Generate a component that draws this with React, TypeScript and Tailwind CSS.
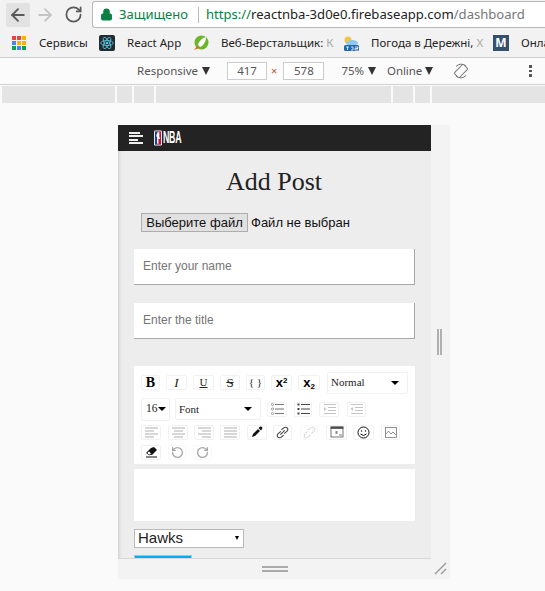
import { ArrowLeft, ArrowRight, RotateCw, Lock } from 'lucide-react';
import type { ReactNode } from 'react';

const ui = "font-['Noto_Sans',sans-serif]";

function Caret({ ml = 'ml-[5px]' }: { ml?: string }) {
  return <span className={`${ml} inline-block h-0 w-0 border-x-[4.5px] border-t-[8px] border-x-transparent border-t-[#333]`} />;
}

function AppsGrid() {
  const colors = ['#e8453c', '#e8453c', '#f4b400', '#4285f4', '#f4b400', '#f4b400', '#0f9d58', '#4285f4', '#0f9d58'];
  return (
    <div className="grid grid-cols-3 gap-[1px]">
      {colors.map((c, i) => (
        <span key={i} className="h-[4px] w-[4px]" style={{ background: c }} />
      ))}
    </div>
  );
}

function ReactIcon() {
  return (
    <svg width="16" height="16" viewBox="0 0 16 16">
      <rect width="16" height="16" rx="2" fill="#222b30" />
      <g fill="none" stroke="#5fc9e6" strokeWidth=".8">
        <ellipse cx="8" cy="8" rx="6.3" ry="2.5" />
        <ellipse cx="8" cy="8" rx="6.3" ry="2.5" transform="rotate(60 8 8)" />
        <ellipse cx="8" cy="8" rx="6.3" ry="2.5" transform="rotate(120 8 8)" />
      </g>
      <circle cx="8" cy="8" r="1.3" fill="#5fc9e6" />
    </svg>
  );
}

function RocketIcon() {
  return (
    <svg width="16" height="16" viewBox="0 0 16 16">
      <circle cx="8.5" cy="7.5" r="7" fill="#6cb52d" />
      <path d="M13 2 C9 3 6 6 5 10 L7 12 C10 11 13 7 13 2Z" fill="#fff" />
      <path d="M4 11 L1 15 L6 13Z" fill="#e8622a" />
    </svg>
  );
}

function WeatherIcon() {
  return (
    <svg width="16" height="16" viewBox="0 0 16 16">
      <circle cx="5" cy="5" r="3.5" fill="#f5c33b" />
      <ellipse cx="9" cy="8" rx="6" ry="3" fill="#8fc7ee" />
      <rect x="1" y="10" width="15" height="6" rx="1.5" fill="#1f67ad" />
      <path d="M3 12h3M4.5 12v3M8 12h2v3h-2M12 12h3v1.5h-3v1.5h3" stroke="#fff" strokeWidth=".8" fill="none" />
    </svg>
  );
}

function Bookmark({ icon, label, fade, w }: { icon: ReactNode; label: string; fade?: string; w: string }) {
  return (
    <div className={`flex shrink-0 items-center ${w}`}>
      <div className="mr-[12px] flex w-[16px] justify-center">{icon}</div>
      <span className="whitespace-nowrap text-[11.5px] text-[#222]">
        {label}
        {fade && <span className="text-[#aaa]">{fade}</span>}
      </span>
    </div>
  );
}

function Ruler() {
  return (
    <div className="mt-[1px] ml-[2px] flex h-[17px] gap-[2px]">
      <div className="w-[113px] bg-[#e4e4e4]" />
      <div className="w-[15px] bg-[#e4e4e4]" />
      <div className="w-[20px] bg-[#e4e4e4]" />
      <div className="w-[235px] bg-[#e4e4e4]" />
      <div className="w-[20px] bg-[#e4e4e4]" />
      <div className="w-[15px] bg-[#e4e4e4]" />
      <div className="flex-1 bg-[#e4e4e4]" />
    </div>
  );
}

function TextField({ placeholder }: { placeholder: string }) {
  return (
    <input
      readOnly
      placeholder={placeholder}
      className="block h-[36px] w-[281px] border-r border-b border-[#a9a9a9] bg-white px-[9px] font-['Liberation_Sans',sans-serif] text-[12px] placeholder:text-[#757575]"
    />
  );
}

function Btn({ children, w, faded = false }: { children: ReactNode; w: string; faded?: boolean }) {
  return (
    <div className={`flex h-[15px] shrink-0 ${w} items-center justify-center rounded-[2px] border border-[#f1f1f1] bg-white ${faded ? 'opacity-40' : ''}`}>
      {children}
    </div>
  );
}

function Lines({ kind }: { kind: 'left' | 'center' | 'right' | 'justify' }) {
  const rows: [number, number][] =
    kind === 'left' ? [[0, 13], [0, 9], [0, 13], [0, 9]]
    : kind === 'center' ? [[0, 13], [2, 9], [0, 13], [2, 9]]
    : kind === 'right' ? [[0, 13], [4, 9], [0, 13], [4, 9]]
    : [[0, 13], [0, 13], [0, 13], [0, 13]];
  return (
    <svg width="13" height="11" viewBox="0 0 13 11">
      {rows.map(([x, w], i) => (
        <rect key={i} x={x} y={i * 3 + 0.5} width={w} height="1" fill="#b0b0b0" />
      ))}
    </svg>
  );
}

function ListIcon({ ordered = false }: { ordered?: boolean }) {
  return (
    <svg width="13" height="12" viewBox="0 0 13 12">
      {[1.5, 6, 10.5].map((y) => (
        <g key={y}>
          {ordered ? <rect x="0.5" y={y - 1} width="2" height="2" fill="#444" /> : <circle cx="1.5" cy={y} r="1.1" fill="none" stroke="#777" strokeWidth=".7" />}
          <rect x="4" y={y - 0.5} width="9" height="1" fill={ordered ? '#444' : '#777'} />
        </g>
      ))}
    </svg>
  );
}

function IndentIcon({ out = false }: { out?: boolean }) {
  return (
    <svg width="13" height="11" viewBox="0 0 13 11" fill="#c4c4c4">
      <rect x="1" y="0" width="12" height="1" />
      <rect x="5" y="3" width="8" height="1" />
      <rect x="5" y="6" width="8" height="1" />
      <rect x="1" y="9" width="12" height="1" />
      <path d={out ? 'M3 3v4L0.5 5z' : 'M1 3v4L3.5 5z'} />
    </svg>
  );
}

function DropDown({ w, label }: { w: string; label: string }) {
  return (
    <div className={`flex h-[22px] shrink-0 ${w} items-center justify-between rounded-[2px] border border-[#f1f1f1] bg-white pr-[8px] pl-[3px] text-[11px] text-[#222]`}>
      <span>{label}</span>
      <span className="h-0 w-0 border-x-[4px] border-t-[4px] border-x-transparent border-t-black" />
    </div>
  );
}

function EditorToolbar() {
  return (
    <div className="flex h-[98px] w-[281px] flex-col bg-white pt-[6px] pl-[7px] font-['Liberation_Serif',serif]">
      <div className="flex items-center">
        <div className="flex items-center gap-[6px]">
          <Btn w="w-[19px]"><span className="text-[14px] leading-none font-bold text-black">B</span></Btn>
          <Btn w="w-[21px]"><span className="text-[13px] leading-none text-[#222] italic">I</span></Btn>
          <Btn w="w-[21px]"><span className="text-[11px] leading-none text-[#222] underline">U</span></Btn>
          <Btn w="w-[20px]"><span className="text-[13px] leading-none text-[#222] line-through">S</span></Btn>
          <Btn w="w-[19px]"><span className="text-[11px] leading-none whitespace-pre text-[#222]">{'{ }'}</span></Btn>
          <Btn w="w-[21px]"><span className="font-['Liberation_Sans',sans-serif] text-[13px] leading-none font-bold text-black">x<sup className="text-[8px]">2</sup></span></Btn>
          <Btn w="w-[22px]"><span className="font-['Liberation_Sans',sans-serif] text-[13px] leading-none font-bold text-black">x<sub className="text-[8px]">2</sub></span></Btn>
        </div>
        <div className="ml-[7px]"><DropDown w="w-[81px]" label="Normal" /></div>
      </div>
      <div className="mt-[4px] flex items-center">
        <div className="flex h-[23px] w-[29px] shrink-0 items-center justify-between rounded-[2px] border border-[#f1f1f1] pr-[3px] pl-[4px] text-[11.5px] text-[#222]">
          <span>16</span>
          <span className="h-0 w-0 border-x-[4px] border-t-[4px] border-x-transparent border-t-black" />
        </div>
        <div className="ml-[5px]"><DropDown w="w-[86px]" label="Font" /></div>
        <div className="ml-[6px]"><Btn w="w-[20px]"><ListIcon /></Btn></div>
        <div className="ml-[7px]"><Btn w="w-[18px]"><ListIcon ordered /></Btn></div>
        <div className="ml-[7px]"><Btn w="w-[20px]"><IndentIcon /></Btn></div>
        <div className="ml-[8px]"><Btn w="w-[19px]"><IndentIcon out /></Btn></div>
      </div>
      <div className="mt-[4px] flex items-center">
        <Btn w="w-[20px]"><Lines kind="left" /></Btn>
        <div className="ml-[7px]"><Btn w="w-[20px]"><Lines kind="center" /></Btn></div>
        <div className="ml-[6px]"><Btn w="w-[20px]"><Lines kind="right" /></Btn></div>
        <div className="ml-[6px]"><Btn w="w-[20px]"><Lines kind="justify" /></Btn></div>
        <div className="ml-[7px]">
          <Btn w="w-[20px]">
            <svg width="12" height="12" viewBox="0 0 12 12"><path d="M1 11 L2 8 L7 3 L9 5 L4 10Z" fill="#111" /><path d="M7.5 2 L9 .8 Q10 .2 11 1 Q11.8 2 11 3 L10 4.5Z" fill="#111" /></svg>
          </Btn>
        </div>
        <div className="ml-[6px]">
          <Btn w="w-[19px]">
            <svg width="13" height="13" viewBox="0 0 12 12" fill="none" stroke="#444"><path d="M5 3.5 L7.5 1.5 Q9 .5 10.5 2 Q11.5 3.5 10 5 L7.5 7" /><path d="M7 8.5 L4.5 10.5 Q3 11.5 1.5 10 Q.5 8.5 2 7 L4.5 5" /><path d="M4 8 L8 4" /></svg>
          </Btn>
        </div>
        <div className="ml-[8px]">
          <Btn w="w-[18px]" faded>
            <svg width="13" height="13" viewBox="0 0 12 12" fill="none" stroke="#888" strokeDasharray="1.5 .6"><path d="M5 3.5 L7.5 1.5 Q9 .5 10.5 2 Q11.5 3.5 10 5 L7.5 7" /><path d="M7 8.5 L4.5 10.5 Q3 11.5 1.5 10 Q.5 8.5 2 7 L4.5 5" /></svg>
          </Btn>
        </div>
        <div className="ml-[8px]">
          <Btn w="w-[21px]">
            <svg width="14" height="12" viewBox="0 0 14 12" fill="none" stroke="#555" strokeWidth=".8"><rect x="1" y="1" width="12" height="10" /><rect x="1" y="1" width="12" height="1.5" fill="#444" /><rect x="5.5" y="5" width="2" height="3" fill="#888" stroke="none" /><path d="M9 9h3" /></svg>
          </Btn>
        </div>
        <div className="ml-[6px]">
          <Btn w="w-[21px]">
            <svg width="13" height="13" viewBox="0 0 13 13" fill="none" stroke="#111"><circle cx="6.5" cy="6.5" r="5.5" /><circle cx="4.5" cy="5" r=".7" fill="#111" stroke="none" /><circle cx="8.5" cy="5" r=".7" fill="#111" stroke="none" /><path d="M3.5 8 Q6.5 11 9.5 8" /></svg>
          </Btn>
        </div>
        <div className="ml-[7px]">
          <Btn w="w-[19px]">
            <svg width="12" height="11" viewBox="0 0 12 11" fill="none" stroke="#777" strokeWidth=".8"><rect x=".5" y=".5" width="11" height="10" /><path d="M1 7 L3.5 4 L6 7 L8 5 L11 8" /></svg>
          </Btn>
        </div>
      </div>
      <div className="mt-[5px] flex items-center">
        <Btn w="w-[20px]">
          <svg width="13" height="12" viewBox="0 0 13 12"><path d="M1 7 L6 2 L9 1 L12 4 L7 9 L4 9Z" fill="#111" /><path d="M2 7 L4 5 L6.5 8 L4 9Z" fill="#fff" stroke="#111" strokeWidth=".6" /><rect x="1" y="10.5" width="11" height="1" fill="#111" /></svg>
        </Btn>
        <div className="ml-[7px]">
          <Btn w="w-[18px]" faded>
            <RotateCw size={13} strokeWidth={2.4} color="#222" className="-scale-x-100" />
          </Btn>
        </div>
        <div className="ml-[7px]">
          <Btn w="w-[19px]" faded>
            <RotateCw size={13} strokeWidth={2.4} color="#222" />
          </Btn>
        </div>
      </div>
    </div>
  );
}

function DevicePage() {
  return (
    <div className="relative h-[434px] w-[313px] overflow-hidden border-b border-[#d8d8d8] bg-[#ededed] shadow-[inset_4px_0_3px_-2px_rgba(0,0,0,0.1)]">
      <div className="flex h-[26px] items-center bg-[#232323] pl-[11px]">
        <div className="flex flex-col gap-[1.5px]">
          <span className="h-[2px] w-[11px] bg-[#eee]" />
          <span className="h-[2px] w-[14px] bg-[#eee]" />
          <span className="h-[2px] w-[9px] bg-[#eee]" />
          <span className="h-[2px] w-[14px] bg-[#eee]" />
        </div>
        <svg className="ml-[11px]" width="8" height="16" viewBox="0 0 9 17">
          <rect width="9" height="17" rx="1.5" fill="#fff" />
          <rect x="1" y="1" width="3.5" height="15" fill="#1d428a" />
          <rect x="4.5" y="1" width="3.5" height="15" fill="#c8102e" />
          <path d="M4 2 L6 2 L6 7 L7 10 L5 9 L5 15 L3.5 15 L3.5 8 L2.5 6Z" fill="#fff" />
        </svg>
        <span className="ml-[1px] origin-left [transform:scaleX(0.55)] font-['Liberation_Sans',sans-serif] text-[16px] leading-none font-bold tracking-[-0.5px] text-white">NBA</span>
      </div>
      <h1 className="mt-[16px] pr-[1px] text-center font-['Liberation_Serif',serif] text-[26px] leading-[30px] text-[#222]">Add Post</h1>
      <div className="mt-[16px] ml-[23px] flex items-center font-['Liberation_Sans',sans-serif] text-[13px] text-[#111]">
        <button type="button" className="h-[19px] w-[107px] rounded-none border border-[#adadad] bg-[#e1e1e1] px-0 leading-none">Выберите файл</button>
        <span className="ml-[3px]">Файл не выбран</span>
      </div>
      <div className="mt-[16px] ml-[16px] flex flex-col gap-[18px]">
        <TextField placeholder="Enter your name" />
        <TextField placeholder="Enter the title" />
      </div>
      <div className="mt-[27px] ml-[16px]">
        <EditorToolbar />
        <div className="mt-[5px] h-[52px] w-[281px] bg-white" />
      </div>
      <div className="mt-[8px] ml-[16px] flex h-[19px] w-[110px] items-center justify-between border border-[#b9b9b9] bg-white pr-[4px] pl-[3px] font-['Liberation_Sans',sans-serif] text-[15px] text-[#222]">
        <span>Hawks</span>
        <span className="h-0 w-0 border-x-[2.5px] border-t-[4px] border-x-transparent border-t-black" />
      </div>
      <div className="mt-[7px] ml-[16px] h-[10px] w-[58px] border border-[#9fc5d8] bg-[#00aef2]" />
    </div>
  );
}

export default function App() {
  return (
    <div className={`h-[591px] w-[545px] overflow-hidden bg-[#fafafa] ${ui}`}>
      <div className="flex h-[29px] items-center bg-[#f2f2f2] pl-[6px]">
        <div className="flex h-[24px] w-[24px] items-center justify-center rounded-[2px] bg-[#e2e2e2]">
          <ArrowLeft size={20} color="#5a5a5a" strokeWidth={2.2} />
        </div>
        <ArrowRight size={20} color="#c4c4c4" strokeWidth={2.2} className="ml-[5px]" />
        <RotateCw size={19} color="#5a5a5a" strokeWidth={2.2} className="ml-[9px]" />
        <div className="ml-[9px] flex h-[27px] flex-1 items-center rounded-l-[3px] border border-r-0 border-[#b8b8b8] bg-white pl-[7px]">
          <Lock size={13} color="#0b8043" fill="#0b8043" />
          <span className="ml-[6px] text-[13px] text-[#0b8043]">Защищено</span>
          <span className="mr-[7px] ml-[10px] h-[16px] w-px bg-[#bbb]" />
          <span className="whitespace-nowrap text-[13.08px] text-[#0b8043]">https://</span>
          <span className="whitespace-nowrap text-[13.08px] text-[#222]">reactnba-3d0e0.firebaseapp.com</span>
          <span className="whitespace-nowrap text-[13.08px] text-[#777]">/dashboard</span>
        </div>
      </div>
      <div className="flex h-[28px] items-center overflow-hidden bg-[#f2f2f2] pl-[11px]">
        <Bookmark icon={<AppsGrid />} label="Сервисы" w="w-[88px]" />
        <Bookmark icon={<ReactIcon />} label="React App" w="w-[94px]" />
        <Bookmark icon={<RocketIcon />} label="Веб-Верстальщик: " fade="К" w="w-[150px]" />
        <Bookmark icon={<WeatherIcon />} label="Погода в Дережні, " fade="Х" w="w-[150px]" />
        <Bookmark
          icon={<span className="flex h-[16px] w-[16px] items-center justify-center bg-[#34506e] text-[12px] font-bold text-white">M</span>}
          label="Онлайн"
          w="w-[80px]"
        />
      </div>
      <div className="flex h-[28px] items-center border-t border-b border-[#d0d0d0] bg-[#fbfbfb] pl-[137px] text-[11.5px] text-[#555]">
        <span>Responsive</span>
        <Caret ml="ml-[4px]" />
        <div className="ml-[17px] flex h-[18px] w-[40px] items-center justify-center border border-[#ccc] bg-white text-[11.5px]">417</div>
        <span className="mr-[6px] ml-[4px] text-[11px] text-[#b5562c]">×</span>
        <div className="flex h-[18px] w-[41px] items-center justify-center border border-[#ccc] bg-white text-[11.5px]">578</div>
        <span className="ml-[17px]">75%</span>
        <Caret ml="ml-[4px]" />
        <span className="ml-[11px] tracking-[-0.1px]">Online</span>
        <Caret ml="ml-[3px]" />
        <svg className="ml-[20px] shrink-0" width="16" height="16" viewBox="0 0 16 16" fill="none" stroke="#777" strokeWidth="1">
          <path d="M3 3.5 A7 7 0 0 1 13 3 M13 12.5 A7 7 0 0 1 3 13" />
          <rect x="4.5" y="1.5" width="7" height="13" rx="1.5" transform="rotate(45 8 8)" />
        </svg>
        <div className="ml-[60px] flex shrink-0 flex-col gap-[2px]">
          <span className="h-[2.5px] w-[3px] bg-[#555]" />
          <span className="h-[2.5px] w-[3px] bg-[#555]" />
          <span className="h-[2.5px] w-[3px] bg-[#555]" />
        </div>
      </div>
      <Ruler />
      <div className="mt-[22px] ml-[118px] w-[332px] bg-[#f3f3f3]">
        <div className="flex">
          <DevicePage />
          <div className="flex flex-1 items-center justify-center gap-[1px] pr-[2px]">
            <span className="h-[26px] w-[2px] bg-[#b0b0b0]" />
            <span className="h-[26px] w-[2px] bg-[#b0b0b0]" />
          </div>
        </div>
        <div className="relative flex h-[20px] w-[313px] flex-col items-center justify-center gap-[2px]">
          <span className="h-[2px] w-[26px] bg-[#aaa]" />
          <span className="h-[2px] w-[26px] bg-[#aaa]" />
          <svg className="absolute top-[3px] -right-[16px]" width="13" height="13" viewBox="0 0 13 13" stroke="#999" strokeWidth="1.4">
            <path d="M1 12 L12 1 M7 12 L12 7" />
          </svg>
        </div>
      </div>
    </div>
  );
}
